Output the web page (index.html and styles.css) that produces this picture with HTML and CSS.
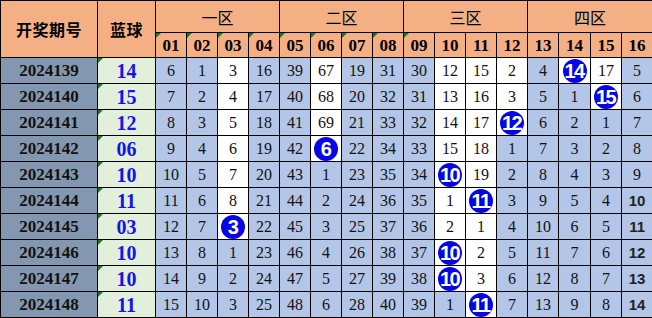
FILE: index.html
```html
<!DOCTYPE html>
<html lang="zh">
<head>
<meta charset="utf-8">
<title>蓝球分区走势</title>
<link rel="stylesheet" href="styles.css">
</head>
<body>
<table class="chart">
  <colgroup>
    <col class="c-period"><col class="c-blue">
    <col class="c-n"><col class="c-n"><col class="c-n"><col class="c-n">
    <col class="c-n"><col class="c-n"><col class="c-n"><col class="c-n">
    <col class="c-n"><col class="c-n"><col class="c-n"><col class="c-n">
    <col class="c-n"><col class="c-w"><col class="c-n"><col class="c-n">
  </colgroup>
  <thead>
    <tr class="zone-row">
      <th class="big" rowspan="2">开奖期号</th>
      <th class="big" rowspan="2">蓝球</th>
      <th class="zone" colspan="4">一区</th>
      <th class="zone" colspan="4">二区</th>
      <th class="zone" colspan="4">三区</th>
      <th class="zone" colspan="4">四区</th>
    </tr>
    <tr class="num-row">
      <th class="t">01</th><th class="t">02</th><th class="t">03</th><th class="t">04</th>
      <th class="t">05</th><th class="t">06</th><th class="t">07</th><th class="t">08</th>
      <th class="t">09</th><th>10</th><th>11</th><th>12</th>
      <th>13</th><th>14</th><th>15</th><th>16</th>
    </tr>
  </thead>
  <tbody>
    <tr>
      <td class="period">2024139</td><td class="blue t">14</td>
      <td>6</td><td>1</td><td class="w">3</td><td>16</td>
      <td>39</td><td class="w">67</td><td>19</td><td>31</td>
      <td>30</td><td class="w">12</td><td class="w">15</td><td class="w">2</td>
      <td>4</td><td class="w"><span class="ball">14</span></td><td class="w">17</td><td>5</td>
    </tr>
    <tr>
      <td class="period">2024140</td><td class="blue t">15</td>
      <td>7</td><td>2</td><td class="w">4</td><td>17</td>
      <td>40</td><td class="w">68</td><td>20</td><td>32</td>
      <td>31</td><td class="w">13</td><td class="w">16</td><td class="w">3</td>
      <td>5</td><td>1</td><td class="w"><span class="ball">15</span></td><td>6</td>
    </tr>
    <tr>
      <td class="period">2024141</td><td class="blue t">12</td>
      <td>8</td><td>3</td><td class="w">5</td><td>18</td>
      <td>41</td><td class="w">69</td><td>21</td><td>33</td>
      <td>32</td><td class="w">14</td><td class="w">17</td><td class="w"><span class="ball">12</span></td>
      <td>6</td><td>2</td><td>1</td><td>7</td>
    </tr>
    <tr>
      <td class="period">2024142</td><td class="blue t">06</td>
      <td>9</td><td>4</td><td class="w">6</td><td>19</td>
      <td>42</td><td class="w"><span class="ball">6</span></td><td>22</td><td>34</td>
      <td>33</td><td class="w">15</td><td class="w">18</td><td>1</td>
      <td>7</td><td>3</td><td>2</td><td>8</td>
    </tr>
    <tr>
      <td class="period">2024143</td><td class="blue t">10</td>
      <td>10</td><td>5</td><td class="w">7</td><td>20</td>
      <td>43</td><td>1</td><td>23</td><td>35</td>
      <td>34</td><td class="w"><span class="ball">10</span></td><td class="w">19</td><td>2</td>
      <td>8</td><td>4</td><td>3</td><td>9</td>
    </tr>
    <tr>
      <td class="period">2024144</td><td class="blue t">11</td>
      <td>11</td><td>6</td><td class="w">8</td><td>21</td>
      <td>44</td><td>2</td><td>24</td><td>36</td>
      <td>35</td><td class="w">1</td><td class="w"><span class="ball">11</span></td><td>3</td>
      <td>9</td><td>5</td><td>4</td><td class="b">10</td>
    </tr>
    <tr>
      <td class="period">2024145</td><td class="blue t">03</td>
      <td>12</td><td>7</td><td class="w"><span class="ball">3</span></td><td>22</td>
      <td>45</td><td>3</td><td>25</td><td>37</td>
      <td>36</td><td class="w">2</td><td class="w">1</td><td>4</td>
      <td>10</td><td>6</td><td>5</td><td class="b">11</td>
    </tr>
    <tr>
      <td class="period">2024146</td><td class="blue t">10</td>
      <td>13</td><td>8</td><td>1</td><td>23</td>
      <td>46</td><td>4</td><td>26</td><td>38</td>
      <td>37</td><td class="w"><span class="ball">10</span></td><td class="w">2</td><td>5</td>
      <td>11</td><td>7</td><td>6</td><td class="b">12</td>
    </tr>
    <tr>
      <td class="period">2024147</td><td class="blue t">10</td>
      <td>14</td><td>9</td><td>2</td><td>24</td>
      <td>47</td><td>5</td><td>27</td><td>39</td>
      <td>38</td><td class="w"><span class="ball">10</span></td><td class="w">3</td><td>6</td>
      <td>12</td><td>8</td><td>7</td><td class="b">13</td>
    </tr>
    <tr>
      <td class="period">2024148</td><td class="blue t">11</td>
      <td>15</td><td>10</td><td>3</td><td>25</td>
      <td>48</td><td>6</td><td>28</td><td>40</td>
      <td>39</td><td>1</td><td class="w"><span class="ball">11</span></td><td>7</td>
      <td>13</td><td>9</td><td>8</td><td class="b">14</td>
    </tr>
  </tbody>
</table>
</body>
</html>
```

FILE: styles.css
```css
html, body {
  margin: 0;
  padding: 0;
  background: #ffffff;
}

.chart {
  border-collapse: collapse;
  table-layout: fixed;
  width: 652px;
  font-family: "Liberation Serif", "Noto Sans CJK SC", serif;
  color: #111;
}

.c-period { width: 97px; }
.c-blue { width: 58px; }
.c-n { width: 31px; }
.c-w { width: 32px; }

.chart th,
.chart td {
  border: 1px solid #000;
  padding: 0;
  text-align: center;
  vertical-align: middle;
  position: relative;
  white-space: nowrap;
  overflow: hidden;
}

.chart thead th {
  background: #f4b084;
  color: #000;
}

.zone-row { height: 32px; }
.num-row { height: 25px; }
.chart tbody tr { height: 26px; }

.big {
  font-family: "Noto Sans CJK SC", sans-serif;
  font-weight: 700;
  font-size: 16px;
  letter-spacing: 0.5px;
}

.zone {
  font-family: "Noto Sans CJK SC", sans-serif;
  font-weight: 400;
  font-size: 16px;
}

.num-row th {
  font-family: "Liberation Serif", serif;
  font-weight: 700;
  font-size: 17px;
  padding-top: 1px;
}

.chart tbody td {
  background: #b4c6e7;
  font-size: 16px;
  line-height: 1;
}

.chart tbody td.w {
  background: #ffffff;
}

.chart tbody td.period {
  background: #8497b0;
  font-weight: 700;
  font-size: 17px;
  color: #111;
}

.chart tbody td.blue {
  background: #e2efda;
  color: #1414ec;
  font-weight: 700;
  font-size: 20px;
}

.chart tbody td.b {
  font-family: "Liberation Sans", sans-serif;
  font-weight: 700;
  font-size: 15px;
  color: #222;
}

.t::before {
  content: "";
  position: absolute;
  left: 0;
  top: 0;
  width: 0;
  height: 0;
  border-top: 5px solid #1f7a1f;
  border-right: 5px solid transparent;
}

.ball {
  display: inline-flex;
  align-items: center;
  justify-content: center;
  width: 24px;
  height: 24px;
  border-radius: 50%;
  background: #0505e6;
  color: #fff;
  font-family: "Liberation Sans Narrow", "Liberation Sans", sans-serif;
  font-weight: 700;
  font-size: 20px;
  letter-spacing: -1.5px;
  text-indent: -1px;
  line-height: 1;
  vertical-align: middle;
}
```
